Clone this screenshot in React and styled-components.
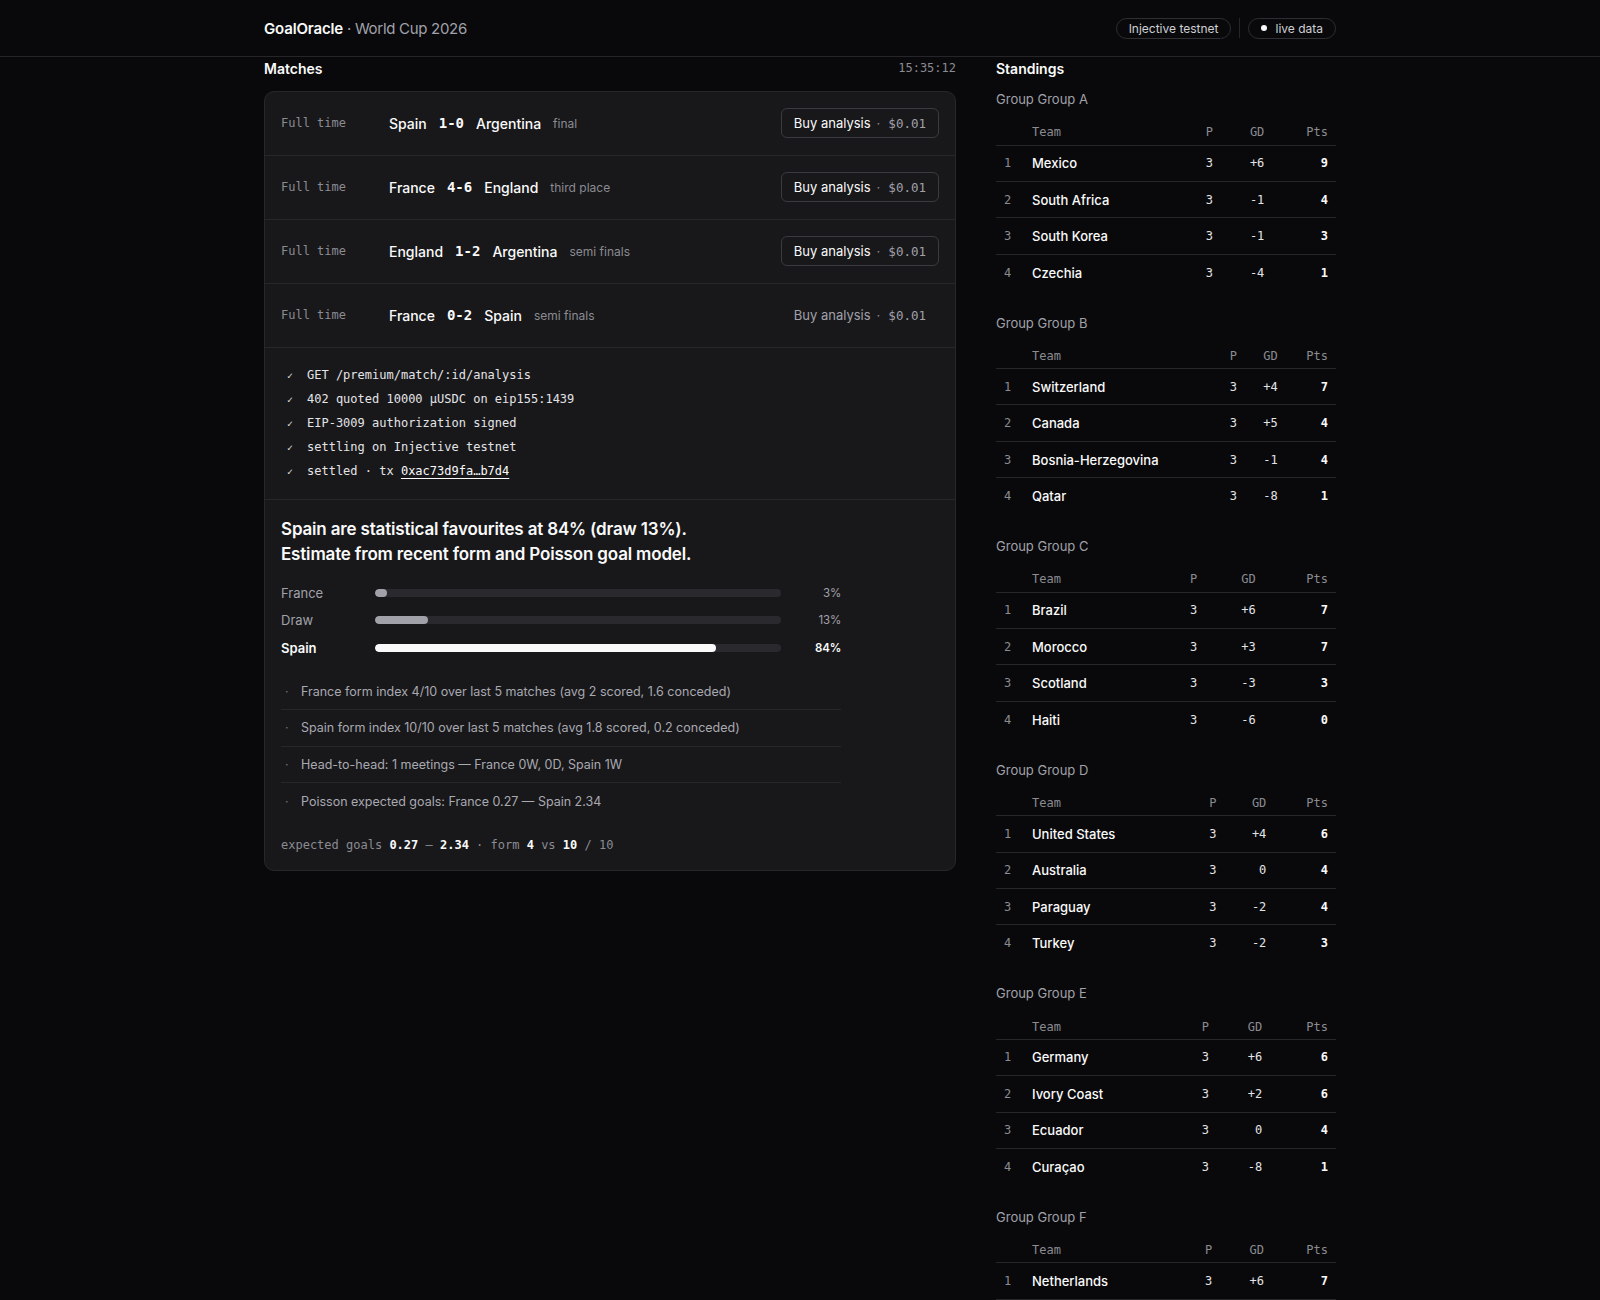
import styled, { createGlobalStyle } from 'styled-components';

const GlobalStyle = createGlobalStyle`
  body {
    margin: 0;
    background: #09090b;
    color: #fafafa;
    font-family: Inter, "Noto Sans", sans-serif;
    -webkit-font-smoothing: antialiased;
  }
  * { box-sizing: border-box; }
`;

const mono = `"DejaVu Sans Mono", "Liberation Mono", monospace`;

const matches = [
  { home: 'Spain', away: 'Argentina', score: '1-0', stage: 'final' },
  { home: 'France', away: 'England', score: '4-6', stage: 'third place' },
  { home: 'England', away: 'Argentina', score: '1-2', stage: 'semi finals' },
  { home: 'France', away: 'Spain', score: '0-2', stage: 'semi finals', active: true },
];

const log = [
  'GET /premium/match/:id/analysis',
  '402 quoted 10000 µUSDC on eip155:1439',
  'EIP-3009 authorization signed',
  'settling on Injective testnet',
];

const probs = [
  { label: 'France', pct: 3 },
  { label: 'Draw', pct: 13 },
  { label: 'Spain', pct: 84, fav: true },
];

const notes = [
  'France form index 4/10 over last 5 matches (avg 2 scored, 1.6 conceded)',
  'Spain form index 10/10 over last 5 matches (avg 1.8 scored, 0.2 conceded)',
  'Head-to-head: 1 meetings — France 0W, 0D, Spain 1W',
  'Poisson expected goals: France 0.27 — Spain 2.34',
];

const groups = [
  { name: 'A', rows: [['Mexico', 3, '+6', 9], ['South Africa', 3, '-1', 4], ['South Korea', 3, '-1', 3], ['Czechia', 3, '-4', 1]] },
  { name: 'B', rows: [['Switzerland', 3, '+4', 7], ['Canada', 3, '+5', 4], ['Bosnia-Herzegovina', 3, '-1', 4], ['Qatar', 3, '-8', 1]] },
  { name: 'C', rows: [['Brazil', 3, '+6', 7], ['Morocco', 3, '+3', 7], ['Scotland', 3, '-3', 3], ['Haiti', 3, '-6', 0]] },
  { name: 'D', rows: [['United States', 3, '+4', 6], ['Australia', 3, '0', 4], ['Paraguay', 3, '-2', 4], ['Turkey', 3, '-2', 3]] },
  { name: 'E', rows: [['Germany', 3, '+6', 6], ['Ivory Coast', 3, '+2', 6], ['Ecuador', 3, '0', 4], ['Curaçao', 3, '-8', 1]] },
  { name: 'F', rows: [['Netherlands', 3, '+6', 7], ['Japan', 3, '+1', 4], ['Sweden', 3, '-2', 3], ['Tunisia', 3, '-5', 1]] },
];

export default function App() {
  return (
    <>
      <GlobalStyle />
      <TopBar>
        <TopInner>
          <Brand>
            GoalOracle<BrandSub> · World Cup 2026</BrandSub>
          </Brand>
          <Pills>
            <Pill>Injective testnet</Pill>
            <Divider />
            <Pill>
              <Dot />
              live data
            </Pill>
          </Pills>
        </TopInner>
      </TopBar>

      <Main>
        <section>
          <SectionHead>
            <SectionTitle>Matches</SectionTitle>
            <Clock>15:35:12</Clock>
          </SectionHead>
          <Card>
            {matches.map((m) => (
              <MatchRow key={m.home + m.away + m.score}>
                <Status>Full time</Status>
                <Teams>
                  <Team>{m.home}</Team>
                  <Score>{m.score}</Score>
                  <Team>{m.away}</Team>
                  <Stage>{m.stage}</Stage>
                </Teams>
                <BuyButton $active={m.active}>
                  Buy analysis<Sep>·</Sep>
                  <Price>$0.01</Price>
                </BuyButton>
              </MatchRow>
            ))}

            <LogBlock>
              {log.map((l) => (
                <LogLine key={l}>
                  <Check>✓</Check>
                  {l}
                </LogLine>
              ))}
              <LogLine>
                <Check>✓</Check>
                settled · tx <TxLink>0xac73d9fa…b7d4</TxLink>
              </LogLine>
            </LogBlock>

            <Analysis>
              <Headline>
                Spain are statistical favourites at 84% (draw 13%).
                <br />
                Estimate from recent form and Poisson goal model.
              </Headline>
              <Bars>
                {probs.map((p) => (
                  <BarRow key={p.label}>
                    <BarLabel $fav={p.fav}>{p.label}</BarLabel>
                    <Track>
                      <Fill $fav={p.fav} style={{ width: `${Math.max(p.pct, 3)}%` }} />
                    </Track>
                    <BarPct $fav={p.fav}>{p.pct}%</BarPct>
                  </BarRow>
                ))}
              </Bars>
              <Notes>
                {notes.map((n) => (
                  <Note key={n}>
                    <NoteDot>·</NoteDot>
                    {n}
                  </Note>
                ))}
              </Notes>
              <Summary>
                expected goals <b>0.27</b> – <b>2.34</b> · form <b>4</b> vs <b>10</b> / 10
              </Summary>
            </Analysis>
          </Card>
        </section>

        <section>
          <SectionHead>
            <SectionTitle>Standings</SectionTitle>
          </SectionHead>
          {groups.map((g) => (
            <Group key={g.name}>
              <GroupLabel>Group Group {g.name}</GroupLabel>
              <Table>
                <thead>
                  <tr>
                    <Th />
                    <Th $left>Team</Th>
                    <Th>P</Th>
                    <Th>GD</Th>
                    <Th>Pts</Th>
                  </tr>
                </thead>
                <tbody>
                  {g.rows.map((r, i) => (
                    <Tr key={r[0]}>
                      <Rank>{i + 1}</Rank>
                      <TeamCell>{r[0]}</TeamCell>
                      <Num>{r[1]}</Num>
                      <Num>{r[2]}</Num>
                      <Pts>{r[3]}</Pts>
                    </Tr>
                  ))}
                </tbody>
              </Table>
            </Group>
          ))}
        </section>
      </Main>
    </>
  );
}

const TopBar = styled.header`
  border-bottom: 1px solid #26262a;
`;

const TopInner = styled.div`
  max-width: 1072px;
  margin: 0 auto;
  height: 56px;
  display: flex;
  align-items: center;
  justify-content: space-between;
`;

const Brand = styled.div`
  font-size: 15px;
  font-weight: 600;
  color: #fafafa;
  letter-spacing: -0.01em;
`;

const BrandSub = styled.span`
  font-weight: 400;
  color: #a1a1aa;
  letter-spacing: -0.02em;
`;

const Pills = styled.div`
  display: flex;
  align-items: center;
  gap: 8px;
`;

const Pill = styled.span`
  display: inline-flex;
  align-items: center;
  gap: 8px;
  height: 21px;
  padding: 0 12px;
  border: 1px solid #2e2e33;
  border-radius: 999px;
  font-size: 12px;
  color: #cfcfd4;
`;

const Dot = styled.span`
  width: 6px;
  height: 6px;
  border-radius: 50%;
  background: #fafafa;
`;

const Divider = styled.span`
  width: 1px;
  height: 20px;
  background: #26262a;
`;

const Main = styled.main`
  max-width: 1072px;
  margin: 0 auto;
  padding-top: 1px;
  display: grid;
  grid-template-columns: 1fr 340px;
  gap: 40px;
  align-items: start;
`;

const SectionHead = styled.div`
  height: 20px;
  display: flex;
  align-items: center;
  justify-content: space-between;
  margin-bottom: 13px;
`;

const SectionTitle = styled.h2`
  margin: 0;
  font-size: 14px;
  font-weight: 600;
  color: #fafafa;
`;

const Clock = styled.span`
  font-family: ${mono};
  font-size: 12px;
  color: #8b8b92;
`;

const Card = styled.div`
  background: #18181b;
  border: 1px solid #27272a;
  border-radius: 10px;
  overflow: hidden;
`;

const MatchRow = styled.div`
  height: 64px;
  display: flex;
  align-items: center;
  padding: 0 16px 1px;
  border-bottom: 1px solid #27272a;
`;

const Status = styled.span`
  width: 108px;
  flex: none;
  font-family: ${mono};
  font-size: 12px;
  color: #8b8b92;
`;

const Teams = styled.div`
  display: flex;
  align-items: center;
  gap: 12px;
`;

const Team = styled.span`
  font-size: 14px;
  font-weight: 500;
  color: #fafafa;
`;

const Score = styled.span`
  font-family: ${mono};
  font-size: 14px;
  font-weight: 700;
  color: #fafafa;
`;

const Stage = styled.span`
  font-size: 12px;
  color: #8b8b92;
`;

const BuyButton = styled.button`
  margin-left: auto;
  height: 30px;
  padding: 0 12px;
  display: inline-flex;
  align-items: center;
  background: transparent;
  border: 1px solid ${(p) => (p.$active ? 'transparent' : '#3a3a40')};
  border-radius: 6px;
  font-family: Inter, sans-serif;
  font-size: 13px;
  font-weight: 400;
  color: ${(p) => (p.$active ? '#a1a1aa' : '#fafafa')};
  cursor: pointer;
`;

const Sep = styled.span`
  margin: 0 8px 0 6px;
  color: #8b8b92;
`;

const Price = styled.span`
  font-family: ${mono};
  font-size: 12.5px;
  color: #a1a1aa;
`;

const LogBlock = styled.div`
  padding: 15px 16px 16px;
  border-bottom: 1px solid #27272a;
`;

const LogLine = styled.div`
  height: 24px;
  display: flex;
  align-items: center;
  font-family: ${mono};
  font-size: 12px;
  color: #e4e4e7;
  white-space: pre;
`;

const Check = styled.span`
  width: 26px;
  padding-left: 6px;
  font-size: 10px;
  color: #d4d4d8;
`;

const TxLink = styled.a`
  color: #fafafa;
  text-decoration: underline;
  text-underline-offset: 3px;
`;

const Analysis = styled.div`
  padding: 17px 16px 16px;
`;

const Headline = styled.h3`
  margin: 0;
  font-size: 17px;
  line-height: 25px;
  font-weight: 600;
  color: #fafafa;
  letter-spacing: -0.01em;
`;

const Bars = styled.div`
  margin-top: 12px;
  max-width: 560px;
`;

const BarRow = styled.div`
  height: 27.5px;
  display: grid;
  grid-template-columns: 94px 406px 60px;
  align-items: center;
`;

const BarLabel = styled.span`
  font-size: 13px;
  font-weight: ${(p) => (p.$fav ? 600 : 400)};
  color: ${(p) => (p.$fav ? '#fafafa' : '#a1a1aa')};
`;

const Track = styled.div`
  height: 8px;
  border-radius: 4px;
  background: #2a2a2e;
  overflow: hidden;
`;

const Fill = styled.div`
  height: 100%;
  border-radius: 4px;
  background: ${(p) => (p.$fav ? '#fafafa' : '#a1a1aa')};
`;

const BarPct = styled.span`
  text-align: right;
  font-size: 11.5px;
  letter-spacing: -0.02em;
  font-weight: ${(p) => (p.$fav ? 600 : 400)};
  color: ${(p) => (p.$fav ? '#fafafa' : '#a1a1aa')};
`;

const Notes = styled.ul`
  list-style: none;
  margin: 12px 0 0;
  padding: 0;
  max-width: 560px;
`;

const Note = styled.li`
  height: 36.5px;
  display: flex;
  align-items: center;
  font-size: 12.5px;
  color: #a9a9b0;
  border-bottom: 1px solid #27272a;
  &:last-child {
    border-bottom: none;
  }
`;

const NoteDot = styled.span`
  width: 20px;
  padding-left: 4px;
  color: #6b6b72;
`;

const Summary = styled.div`
  margin-top: 16px;
  height: 18px;
  line-height: 18px;
  font-family: ${mono};
  font-size: 12px;
  color: #8b8b92;
  b {
    color: #fafafa;
    font-weight: 700;
  }
`;

const Group = styled.div`
  margin-bottom: 24px;
`;

const GroupLabel = styled.div`
  height: 18px;
  line-height: 18px;
  margin: -1px 0 12px;
  font-size: 13px;
  color: #a1a1aa;
`;

const Table = styled.table`
  width: 100%;
  border-collapse: collapse;
`;

const Th = styled.th`
  height: 25px;
  padding: 0 8px;
  text-align: ${(p) => (p.$left ? 'left' : 'right')};
  font-family: ${mono};
  font-size: 12px;
  font-weight: 400;
  color: #8b8b92;
  border-bottom: 1px solid #27272a;
  vertical-align: middle;
`;

const Tr = styled.tr`
  height: 36.4px;
  border-bottom: 1px solid #27272a;
  &:last-child {
    border-bottom: none;
  }
`;

const Rank = styled.td`
  width: 28px;
  padding: 0 0 0 8px;
  font-family: ${mono};
  font-size: 12px;
  color: #8b8b92;
`;

const TeamCell = styled.td`
  padding: 0 8px;
  font-size: 13px;
  font-weight: 500;
  color: #fafafa;
`;

const Num = styled.td`
  padding: 0 8px;
  text-align: right;
  font-family: ${mono};
  font-size: 12px;
  color: #e4e4e7;
`;

const Pts = styled(Num)`
  font-weight: 700;
  color: #fafafa;
`;
